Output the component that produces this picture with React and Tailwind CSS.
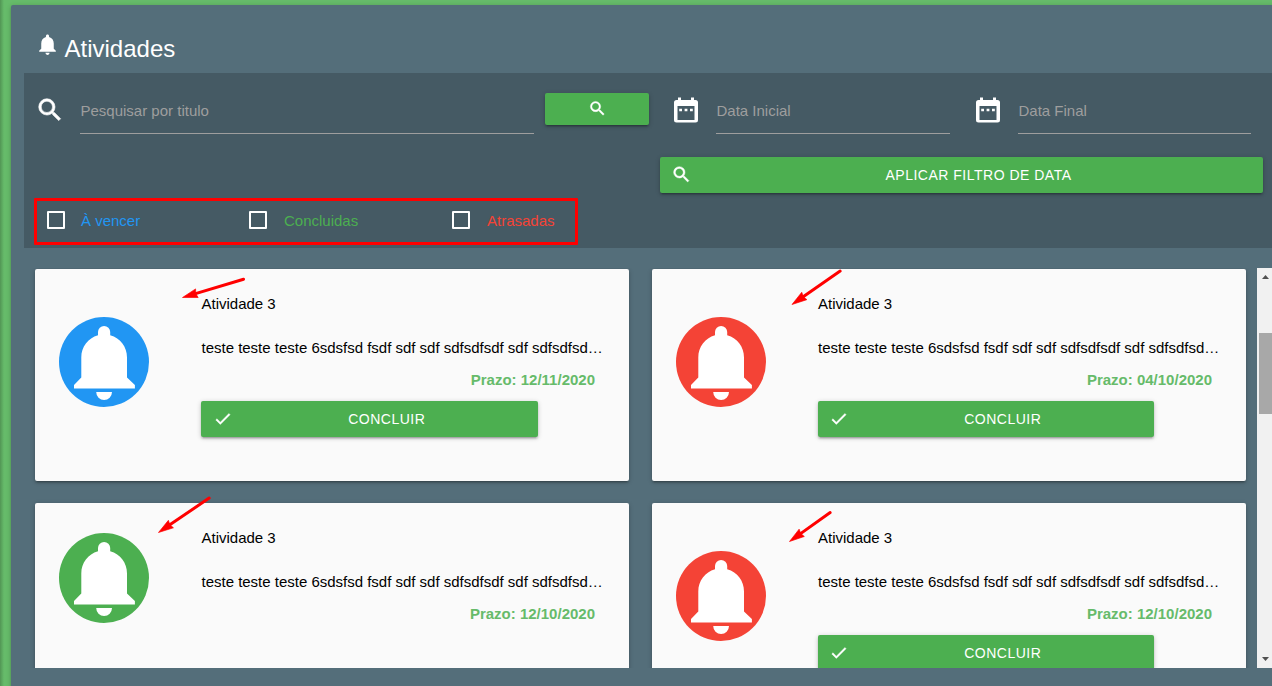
import React from 'react';
import { MdNotifications } from 'react-icons/md';

const DEPTH =
  'shadow-[0_2px_2px_0_rgba(0,0,0,0.14),0_3px_1px_-2px_rgba(0,0,0,0.12),0_1px_5px_0_rgba(0,0,0,0.2)]';

const FILTERS = [
  { label: 'À vencer', color: 'text-[#2196f3]', width: 'w-[202px]', gap: 'ml-4' },
  { label: 'Concluidas', color: 'text-[#4caf50]', width: 'w-[203px]', gap: 'ml-[17px]' },
  { label: 'Atrasadas', color: 'text-[#f44336]', width: 'w-[120px]', gap: 'ml-[17px]' },
];

const ACTIVITIES = [
  { due: '12/11/2020', color: 'text-[#2196f3]', done: false },
  { due: '04/10/2020', color: 'text-[#f44336]', done: false },
  { due: '12/10/2020', color: 'text-[#4caf50]', done: true },
  { due: '12/10/2020', color: 'text-[#f44336]', done: false },
];

const ARROWS = [
  { from: [244.5, 279], to: [182.500, 297.5] },
  { from: [841, 270.5], to: [792, 304.5] },
  { from: [210, 497.5], to: [158.500, 532.5] },
  { from: [831, 512], to: [789.500, 541.5] },
];

function SearchIcon({ className }) {
  return (
    <svg
      viewBox="0 0 24 24"
      fill="currentColor"
      stroke="currentColor"
      strokeWidth="0.5"
      className={`shrink-0 ${className}`}
    >
      <path d="M15.500 14h-.79l-.28-.27A6.471 6.471 0 0 0 16 9.500 6.500 6.500 0 1 0 9.500 16c1.610 0 3.090-.59 4.230-1.570l.27.28v.79l5 4.990L20.490 19l-4.990-5zm-6 0C7.010 14 5 11.990 5 9.500S7.010 5 9.500 5 14 7.010 14 9.500 11.990 14 9.500 14z" />
    </svg>
  );
}

function CheckIcon({ className }) {
  return (
    <svg
      viewBox="0 0 24 24"
      fill="currentColor"
      stroke="currentColor"
      strokeWidth="0.5"
      className={`shrink-0 ${className}`}
    >
      <path d="M9 16.170 4.830 12l-1.420 1.410L9 19 21 7l-1.410-1.410z" />
    </svg>
  );
}

function BellBadge({ className }) {
  return (
    <svg viewBox="0 0 90 90" className={`h-[90px] w-[90px] shrink-0 ${className}`}>
      <circle cx="45" cy="45" r="45" fill="currentColor" />
      <path
        fill="#fff"
        d="M39 18.3V15a6.1 6.1 0 0 1 12.2 0v3.3C61.500 21.200 68 30 68 40.500V60.500L75.900 68V71.600H15V68L22.300 60.500V40.500C22.300 30 29 21.200 39 18.300ZM37.200 75H53a7.900 8 0 0 1-15.800 0Z"
      />
    </svg>
  );
}

function CalendarIcon({ className }) {
  return (
    <svg viewBox="0 0 24 26" className={`h-[26px] w-6 shrink-0 ${className}`}>
      <path
        fill="currentColor"
        fillRule="evenodd"
        d="M4 0.500H7V3H17V0.500H20V3H21.500Q24 3 24 5.500V23Q24 25.500 21.500 25.500H2.500Q0 25.500 0 23V5.500Q0 3 2.500 3H4ZM3.500 9V23H20.500V9ZM5.200 11.700h2.800v2.600H5.200ZM10.600 11.700h2.800v2.600h-2.800ZM16 11.700h2.800v2.600H16Z"
      />
    </svg>
  );
}

function DateField({ label, className }) {
  return (
    <div className={`flex ${className}`}>
      <CalendarIcon className="mt-[24px] ml-[3px] text-white" />
      <div className="ml-[18px] h-[61px] flex-1 border-b border-[#9e9e9e] pt-[27px] pl-[0.5px] leading-[22px] text-[#9e9e9e]">
        {label}
      </div>
    </div>
  );
}

function ActivityCard({ due, color, done, right }) {
  return (
    <article className={`flex h-[212px] w-[594px] rounded-[2px] bg-[#fafafa] ${DEPTH}`}>
      <div className={`pl-6 ${done ? 'pt-[30px]' : 'pt-12'}`}>
        <BellBadge className={color} />
      </div>
      <div className="ml-[52px] w-[402px] pt-6 text-black">
        <h2 className={`leading-[22px] ${right ? '' : 'pl-[0.5px]'}`}>Atividade 3</h2>
        <p
          className={`mt-[22px] leading-[22px] tracking-[-0.01px] whitespace-nowrap ${right ? '' : 'pl-[0.5px]'}`}
        >
          teste teste teste 6sdsfsd fsdf sdf sdf sdfsdfsdf sdf sdfsdfsd…
        </p>
        <p className="mt-[10px] pr-[8px] text-right leading-[22px] font-bold text-[#66bb6a]">
          Prazo: {due}
        </p>
        {!done && (
          <button
            className={`mt-[10px] flex h-9 items-center rounded-[2px] bg-[#4caf50] text-white ${right ? 'w-[336px]' : 'w-[337px]'} ${DEPTH}`}
          >
            <CheckIcon className={`h-[19.5px] w-[19.5px] ${right ? 'ml-[11px]' : 'ml-3'}`} />
            <span className="flex-1 pl-[3px] text-center text-[14px] tracking-[0.5px]">CONCLUIR</span>
          </button>
        )}
      </div>
    </article>
  );
}

function Arrow({ from, to }) {
  const length = Math.hypot(from[0] - to[0], from[1] - to[1]);
  const angle = (Math.atan2(from[1] - to[1], from[0] - to[0]) * 180) / Math.PI;
  return (
    <g transform={`translate(${to[0]} ${to[1]}) rotate(${angle})`}>
      <path d={`M11 0H${length - 1}`} stroke="#f00" strokeWidth="3" strokeLinecap="round" />
      <path d="M0 0L15 -4.500L13.800 0L15 4.500Z" fill="#f00" stroke="#f00" strokeWidth="0.6" />
    </g>
  );
}

export default function App() {
  return (
    <div className="relative flex h-[686px] w-[1272px] overflow-hidden bg-[#66bb6a] pt-[5px] font-['Liberation_Sans',Arial,sans-serif] text-[15px]">
      <div className="-mt-[5px] w-1 shrink-0 bg-linear-to-r from-black/20 to-transparent" />
      <main
        className={`ml-[7px] h-[700px] w-[1280px] shrink-0 rounded-[2px] bg-[#546e7a] pl-[13px] ${DEPTH}`}
      >
        <header className="flex h-[68px] pl-[11px] text-white">
          <MdNotifications className="mt-[27px] h-[25px] w-[25px]" />
          <h1 className="mt-[29px] ml-[4.5px] text-[24px] leading-[30px]">Atividades</h1>
        </header>

        <section className="h-[175px] w-[1260px] bg-[#455a64]">
          <div className="flex h-[84px] pl-[11px]">
            <SearchIcon className="mt-[22px] h-[30px] w-[30px] text-white" />
            <div className="ml-[15px] h-[61px] w-[454px] border-b border-[#9e9e9e] pt-[27px] leading-[22px] text-[#9e9e9e]">
              <span className="pl-[0.5px]">Pesquisar por titulo</span>
            </div>
            <button
              className={`mt-5 ml-[11px] flex h-8 w-[104px] items-center justify-center rounded-[2px] bg-[#4caf50] text-white ${DEPTH}`}
            >
              <SearchIcon className="-mt-px h-[19px] w-[19px]" />
            </button>
            <DateField label="Data Inicial" className="ml-[22px] w-[279px]" />
            <DateField label="Data Final" className="ml-[23px] w-[278px]" />
          </div>
          <button
            className={`ml-[636px] flex h-9 w-[603px] items-center rounded-[2px] bg-[#4caf50] text-white ${DEPTH}`}
          >
            <SearchIcon className="-mt-px ml-[11px] h-[21px] w-[21px]" />
            <span className="flex-1 pl-[2px] text-center text-[14px] tracking-[0.5px]">
              APLICAR FILTRO DE DATA
            </span>
          </button>
          <div className="mt-4 flex pl-[23px]">
            {FILTERS.map((f) => (
              <label key={f.label} className={`flex h-6 shrink-0 items-center ${f.width}`}>
                <span className="-mt-0.5 h-[18px] w-[18px] rounded-[1px] border-2 border-white" />
                <span className={`leading-[22px] ${f.gap} ${f.color}`}>{f.label}</span>
              </label>
            ))}
          </div>
        </section>

        <div className="mt-5 flex h-[400px] w-[1248px] overflow-hidden">
          <div className="grid h-[400px] w-[1233px] grid-cols-[594px_594px] content-start gap-x-[23px] gap-y-[22px] overflow-hidden pt-px pl-[11px]">
            {ACTIVITIES.map((a, i) => (
              <ActivityCard key={i} {...a} right={i % 2 === 1} />
            ))}
          </div>
          <div className="flex h-[400px] w-[15px] flex-col items-center bg-[#f1f1f1]">
            <svg viewBox="0 0 7 4" className="mt-[7px] ml-[2px] h-1 w-[7px]">
              <path d="M0 4L3.500 0L7 4Z" fill="#505050" />
            </svg>
            <div className="mt-[54px] ml-[2px] h-[81px] w-[13px] bg-[#a8a8a8]" />
            <svg viewBox="0 0 7 4" className="mt-auto mb-[7px] ml-[2px] h-1 w-[7px]">
              <path d="M0 0L3.500 4L7 0Z" fill="#505050" />
            </svg>
          </div>
        </div>
      </main>

      <div className="absolute top-[198px] left-[34px] h-[47px] w-[544px] rounded-[1px] border-3 border-[#f00]" />
      <svg viewBox="0 0 1272 686" className="pointer-events-none absolute top-0 left-0 h-[686px] w-[1272px]">
        {ARROWS.map((a, i) => (
          <Arrow key={i} {...a} />
        ))}
      </svg>
    </div>
  );
}
